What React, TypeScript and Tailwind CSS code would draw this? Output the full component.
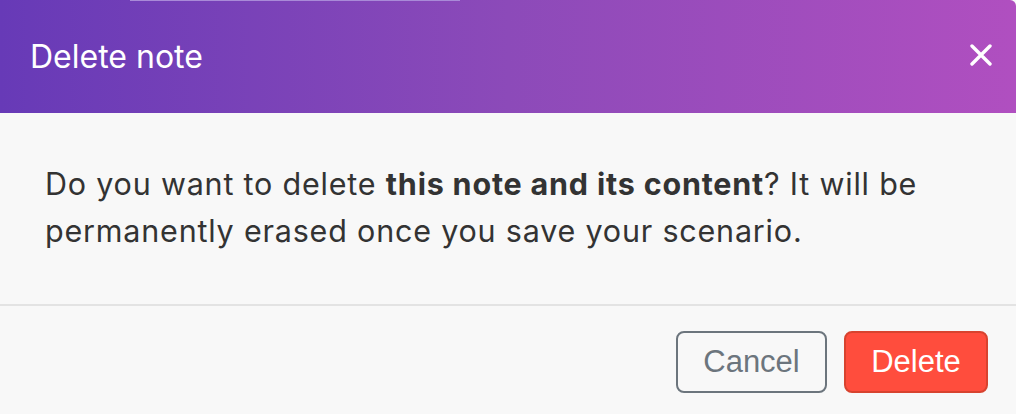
export default function App() {
  return (
    <div className="relative flex h-[414px] w-[1016px] flex-col overflow-hidden bg-[#f8f8f8] font-['Inter',sans-serif]">
      <div className="absolute left-[130px] top-0 h-px w-[330px] bg-[#a98ad8]" />
      <header className="flex h-[113px] items-center justify-between rounded-tr-[6px] bg-[linear-gradient(90deg,#673ab7_0%,#8c4ab9_50%,#b04fc0_100%)] pl-[30px] pr-[19px]">
        <h2 className="text-[32px] font-normal text-white">Delete note</h2>
        <button className="mb-[4px] flex h-[32px] w-[32px] items-center justify-center text-white">
          <svg width="22" height="22" viewBox="0 0 22 22" fill="none" stroke="currentColor" strokeWidth="3.4" strokeLinecap="round">
            <path d="M2 2L20 20M20 2L2 20" />
          </svg>
        </button>
      </header>
      <div className="h-[191px] px-[45px] pt-[47px]">
        <p className="text-[30.5px] leading-[47px] tracking-[0.8px] text-[#333333]">
          Do you want to delete <strong className="font-bold">this note and its content</strong>? It will be permanently erased once you save your scenario.
        </p>
      </div>
      <div className="h-[2px] bg-[#e3e3e3]" />
      <div className="flex justify-end gap-[17px] pr-[28px] pt-[25px]">
        <button className="h-[62px] w-[151px] rounded-[8px] border-2 border-[#6c757d] font-['Liberation_Sans',sans-serif] text-[31px] text-[#6c757d]">
          Cancel
        </button>
        <button className="h-[62px] w-[144px] rounded-[8px] border-2 border-[#d8432f] bg-[#ff4d3d] font-['Liberation_Sans',sans-serif] text-[31px] text-white">
          Delete
        </button>
      </div>
    </div>
  );
}
